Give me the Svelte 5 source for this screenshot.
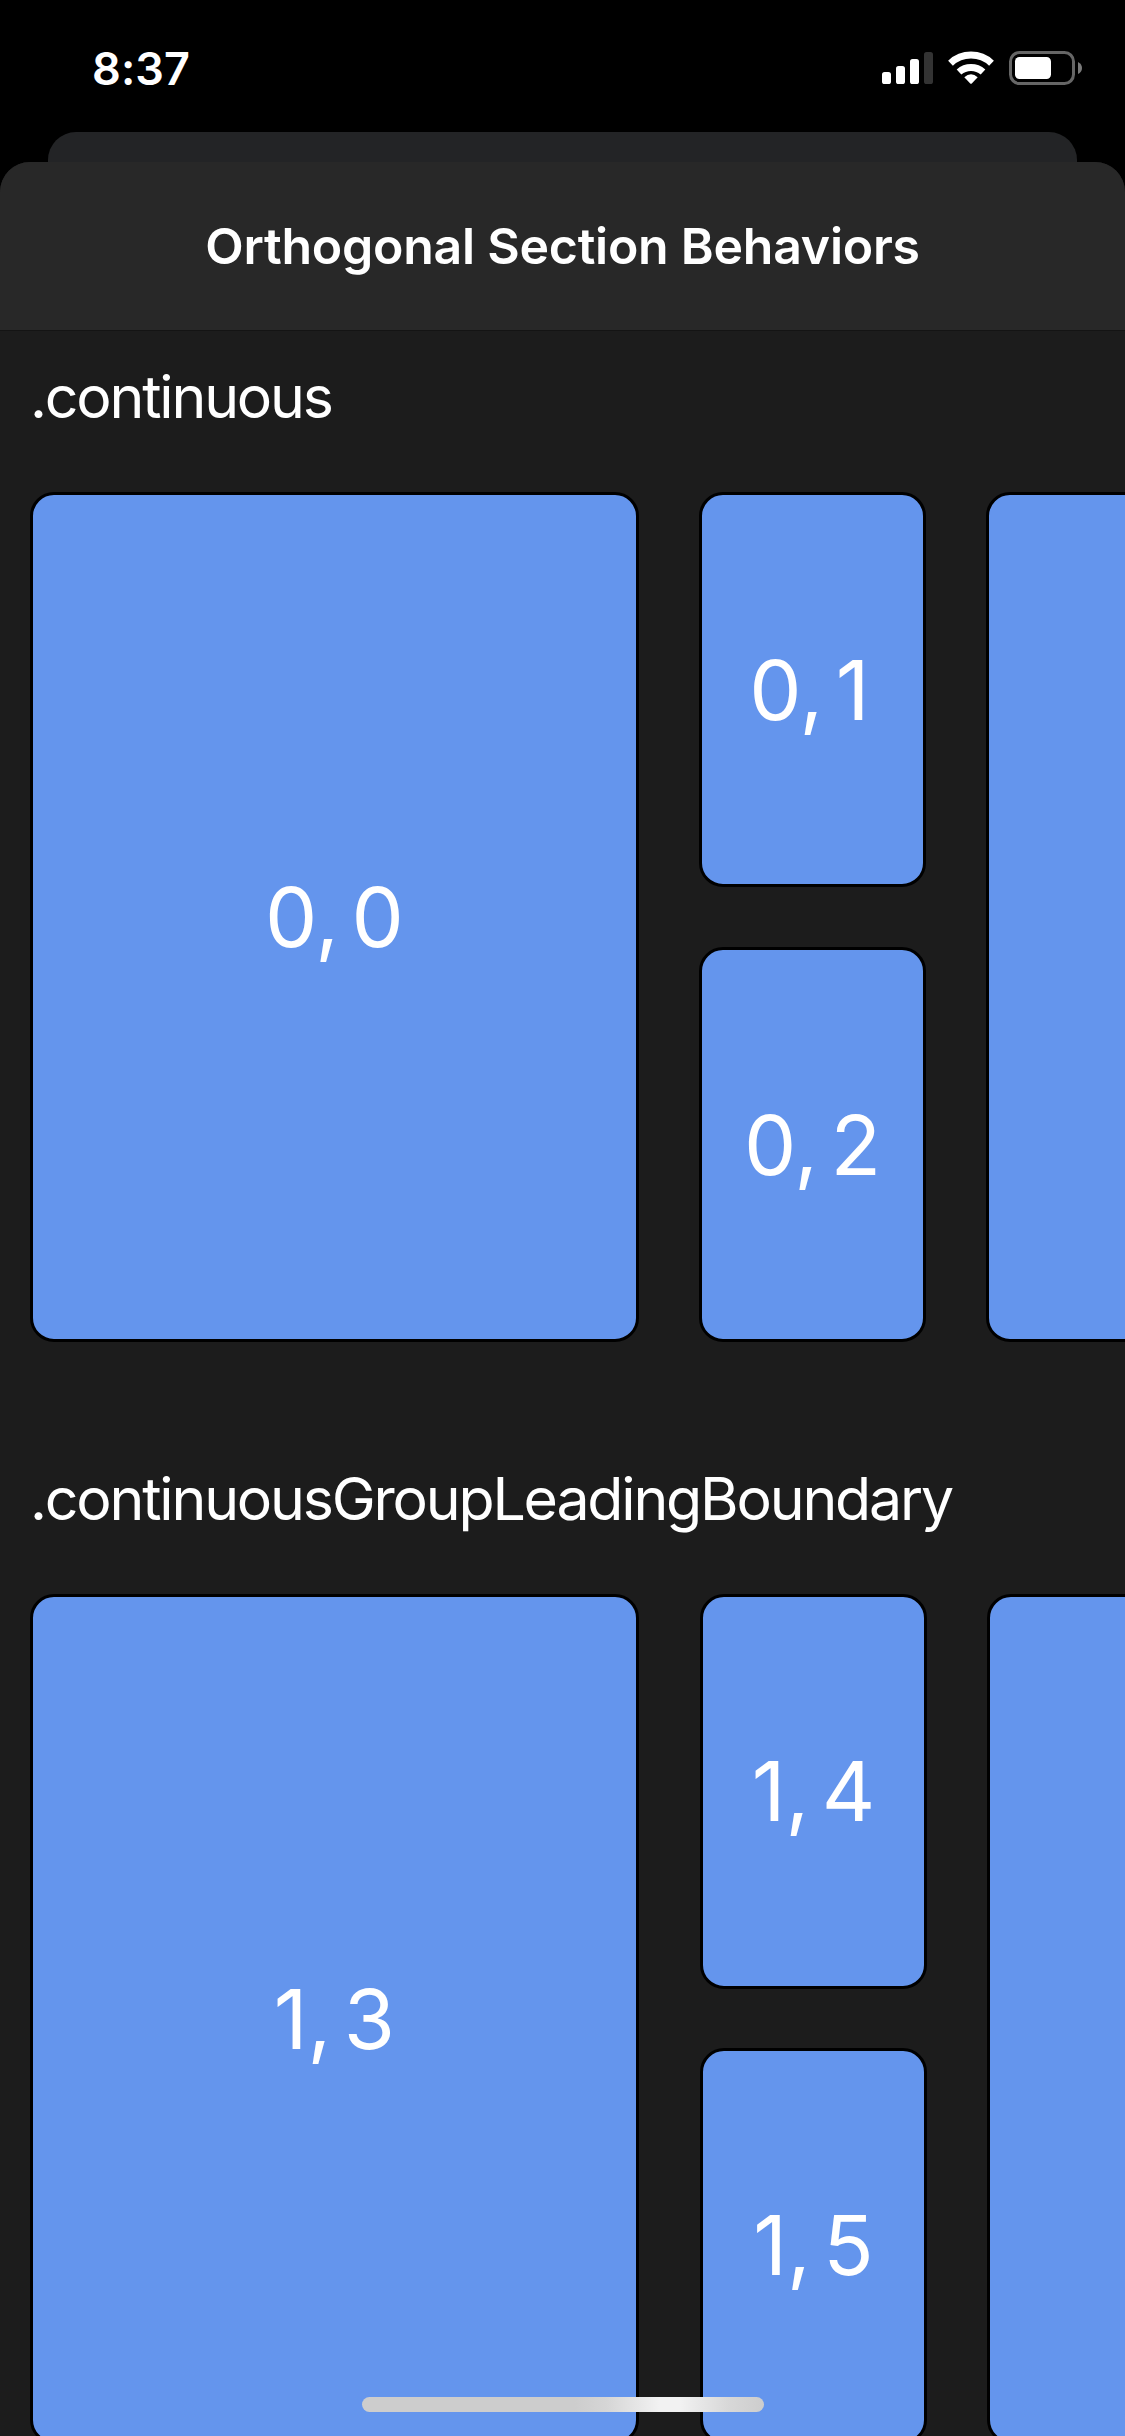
<script>
  const sections = [
    { title: '.continuous', name: 'first', large: '0, 0', small: ['0, 1', '0, 2'] },
    { title: '.continuousGroupLeadingBoundary', name: 'second', large: '1, 3', small: ['1, 4', '1, 5'] }
  ];
</script>

<div class="screen">
  <header class="status">
    <span class="time">8:37</span>
    <svg class="indicators" width="204" height="40" viewBox="0 0 204 40">
      <g fill="#fff">
        <rect x="2" y="23" width="9" height="12" rx="2.6" />
        <rect x="16" y="17" width="9" height="18" rx="2.6" />
        <rect x="30" y="10" width="9" height="25" rx="2.6" />
        <rect x="44" y="3" width="9" height="32" rx="2.6" fill="#333" />
      </g>
      <g fill="none" stroke="#fff" stroke-width="7">
        <path d="M70.5 14.2 A30 30 0 0 1 111.500 14.2" />
        <path d="M79 23 A18 18 0 0 1 103 23" />
      </g>
      <path d="M84.300 28.300 Q91 22.200 97.700 28.300 L92 34.300 Q91 35.300 90 34.300 Z" fill="#fff" />
      <rect x="130.500" y="3.500" width="63" height="31" rx="9" fill="none" stroke="#666" stroke-width="3" />
      <rect x="135" y="8" width="36" height="22" rx="4.500" fill="#fff" />
      <path d="M198 13 Q202 15 202 19 Q202 23 198 25 Z" fill="#7a7a7a" />
    </svg>
  </header>

  <div class="backdrop"></div>

  <main class="sheet">
    <div class="navbar"><h1>Orthogonal Section Behaviors</h1></div>
    {#each sections as section}
      <section class={section.name}>
        <h2>{section.title}</h2>
        <div class="row">
          <div class="tile">{section.large}</div>
          <div class="stack">
            {#each section.small as label}
              <div class="tile">{label}</div>
            {/each}
          </div>
          <div class="tile"></div>
        </div>
      </section>
    {/each}
  </main>

  <div class="home"></div>
</div>

<style>
  :global(body) { margin: 0; background: #000; }
  .screen {
    position: relative;
    display: flex;
    flex-direction: column;
    width: 1125px;
    height: 2436px;
    overflow: hidden;
    background: #000;
    color: #fff;
    font-family: Inter, 'Liberation Sans', sans-serif;
  }
  .status {
    display: flex;
    flex: none;
    justify-content: space-between;
    align-items: flex-start;
    box-sizing: border-box;
    height: 132px;
    padding: 49px 41px 0 92px;
  }
  .time {
    font-size: 45px;
    line-height: 40px;
    font-weight: 570;
    letter-spacing: 0.1px;
  }
  .backdrop {
    flex: none;
    height: 30px;
    margin: 0 48px;
    border-radius: 28px 28px 0 0;
    background: #232426;
  }
  .sheet {
    flex: 1;
    min-height: 0;
    overflow: hidden;
    border-radius: 30px 30px 0 0;
    background: #1c1c1c;
  }
  .navbar {
    display: flex;
    align-items: center;
    justify-content: center;
    box-sizing: border-box;
    height: 169px;
    border-bottom: 1px solid #141414;
    background: #282828;
  }
  h1, h2 { margin: 0; white-space: nowrap; }
  h1 {
    font-size: 50px;
    line-height: 60px;
    font-weight: 580;
    letter-spacing: -0.25px;
  }
  section { height: 1102px; }
  h2 {
    height: 161px;
    padding-left: 30px;
    font-size: 59px;
    line-height: 132px;
    font-weight: 400;
    letter-spacing: -2.18px;
  }
  .row {
    display: grid;
    grid-template-columns: 609px 227px 609px;
    gap: 60px;
    height: 850px;
    margin-left: 30px;
  }
  .second .row { grid-template-columns: 609px 228px 609px; }
  .second .stack { padding-left: 1px; grid-template-rows: 395px 396px; gap: 59px; }
  .stack {
    display: grid;
    grid-template-rows: 1fr 1fr;
    gap: 60px;
  }
  .tile {
    display: flex;
    align-items: center;
    justify-content: center;
    box-sizing: border-box;
    border: 3px solid #000;
    border-radius: 24px;
    background: #6495ed;
    font-size: 83px;
    line-height: 100px;
    white-space: pre;
    word-spacing: -11px;
  }
  .second .stack .tile { padding-bottom: 2px; }
  .first .stack .tile:first-child { padding-right: 6px; }
  .home {
    position: absolute;
    left: 362px;
    top: 2397px;
    width: 402px;
    height: 15px;
    border-radius: 8px;
    background: linear-gradient(90deg, #cdcdcd 0 53%, #d6d6d6 61%, #f2f2f2 74% 79%, #d8d8d8 91%, #cdcdcd);
  }
</style>
